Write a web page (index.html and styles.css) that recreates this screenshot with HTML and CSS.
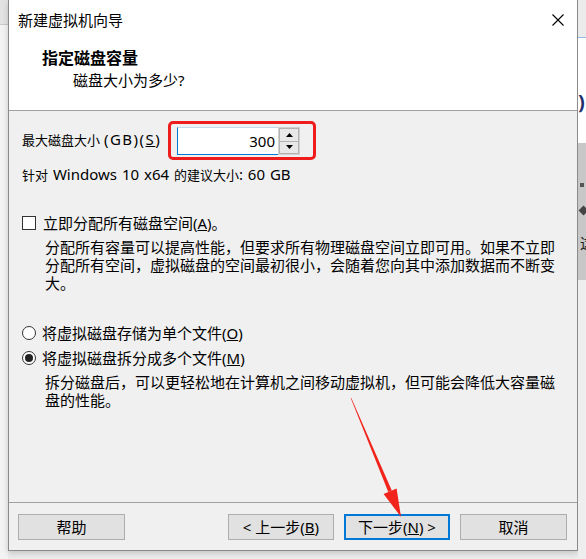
FILE: index.html
```html
<!DOCTYPE html>
<html lang="zh-CN">
<head>
<meta charset="utf-8">
<title>新建虚拟机向导</title>
<link rel="stylesheet" href="styles.css">
</head>
<body>
<div class="screen">
  <div class="strip-left">
    <div class="sl-top"></div>
    <div class="sl-rest"></div>
  </div>

  <div class="dialog">
    <div class="header">
      <div class="titlebar">
        <span class="title">新建虚拟机向导</span>
        <span class="close">
          <svg width="12" height="12" viewBox="0 0 12 12"><path d="M0.5 0.5 L11.5 11.5 M11.5 0.5 L0.5 11.5" stroke="#000" stroke-width="1.1" fill="none"/></svg>
        </span>
      </div>
      <div class="heading">指定磁盘容量</div>
      <div class="subheading">磁盘大小为多少?</div>
    </div>

    <div class="content">
      <div class="size-row">
        <span class="size-label"><span class="cjk">最大磁盘大小</span> <span class="wide">(GB)(<u>S</u>)</span></span>
        <div class="spin">
          <div class="field">300</div>
          <div class="spinner">
            <span class="spin-btn"><svg width="7" height="4" viewBox="0 0 7 4"><path d="M3.5 0 L7 4 L0 4 Z" fill="#000"/></svg></span>
            <span class="spin-btn"><svg width="7" height="4" viewBox="0 0 7 4"><path d="M0 0 L7 0 L3.5 4 Z" fill="#000"/></svg></span>
          </div>
        </div>
      </div>
      <div class="hint"><span class="cjk">针对</span> Windows 10 x64 <span class="cjk">的建议大小</span>: 60 GB</div>

      <div class="check-row"><span class="checkbox"></span>立即分配所有磁盘空间(<u>A</u>)。</div>
      <p class="desc">分配所有容量可以提高性能，但要求所有物理磁盘空间立即可用。如果不立即<br>分配所有空间，虚拟磁盘的空间最初很小，会随着您向其中添加数据而不断变<br>大。</p>

      <div class="radio-row first"><span class="radio"></span>将虚拟磁盘存储为单个文件(<u>O</u>)</div>
      <div class="radio-row second"><span class="radio on"></span>将虚拟磁盘拆分成多个文件(<u>M</u>)</div>
      <p class="desc desc-split">拆分磁盘后，可以更轻松地在计算机之间移动虚拟机，但可能会降低大容量磁<br>盘的性能。</p>
    </div>

    <div class="footer">
      <button class="btn btn-help">帮助</button>
      <div class="nav">
        <button class="btn btn-back">&lt; 上一步(<u>B</u>)</button>
        <button class="btn btn-next">下一步(<u>N</u>) &gt;</button>
        <button class="btn btn-cancel">取消</button>
      </div>
    </div>
  </div>

  <div class="strip-right">
    <div class="sr-top"></div>
    <div class="sr-line"></div>
    <div class="sr-white"><span class="sr-glyph">)</span></div>
    <div class="sr-gray"><span class="sr-dot"></span><span class="sr-diamond"></span><span class="sr-char">这</span></div>
    <div class="sr-rest"></div>
  </div>

  <div class="highlight"></div>
  <svg class="arrow" width="586" height="559" viewBox="0 0 586 559">
    <polygon points="350.6,397.8 351.4,398.2 391.8,490.4 388.3,492.0" fill="#f2231b"/>
    <polygon points="383.6,493.9 396.6,488.5 401,517" fill="#f2231b"/>
  </svg>
</div>
</body>
</html>
```

FILE: styles.css
```css
* { box-sizing: border-box; }

html, body {
  margin: 0;
  padding: 0;
}

body {
  background: #ececec;
  font-family: "Noto Sans", "Noto Sans CJK SC", sans-serif;
  color: #000;
}

.screen {
  position: relative;
  width: 586px;
  height: 559px;
  display: flex;
  align-items: flex-start;
  overflow: hidden;
  background: #ececec;
}

/* background windows at the edges */
.strip-left {
  width: 8px;
  height: 559px;
  display: flex;
  flex-direction: column;
}
.sl-top {
  height: 25px;
  background: #e3e3e3;
  border-bottom: 1px solid #cbcbcb;
}
.sl-rest {
  flex: 1;
  background: #f3f3f3;
}

.strip-right {
  width: 8px;
  height: 559px;
  display: flex;
  flex-direction: column;
  overflow: hidden;
}
.sr-top { height: 37px; background: #ebebeb; }
.sr-line { height: 1px; background: #8fbbe6; }
.sr-white {
  height: 105px;
  background: #ffffff;
  padding-top: 53px;
}
.sr-glyph {
  display: block;
  color: #1f2f6e;
  font-size: 20px;
  font-weight: bold;
  line-height: 22px;
}
.sr-gray {
  height: 137px;
  background: #c7c7c7;
  display: flex;
  flex-direction: column;
  padding-top: 40px;
  padding-left: 2px;
}
.sr-dot { width: 4px; height: 4px; background: #555; flex: none; }
.sr-diamond {
  width: 7px; height: 7px; background: #444;
  transform: rotate(45deg);
  margin-top: 20px;
  flex: none;
}
.sr-char {
  font-family: "Noto Sans CJK SC", sans-serif;
  font-size: 15px;
  line-height: 18px;
  margin-top: 20px;
  color: #222;
}
.sr-rest { flex: 1; background: #eeeeee; }

/* dialog */
.dialog {
  width: 570px;
  height: 551px;
  border: 1px solid #8a8a8a;
  border-top: 0;
  background: #f0f0f0;
  display: flex;
  flex-direction: column;
  box-shadow: 0 2px 6px rgba(0, 0, 0, 0.18);
  font-family: "Noto Sans", "Noto Sans CJK SC", sans-serif;
}

.header {
  height: 111px;
  background: #ffffff;
  border-bottom: 1px solid #a0a0a0;
  font-family: "Noto Sans CJK SC", sans-serif;
}

.titlebar {
  height: 40px;
  display: flex;
  align-items: center;
  justify-content: space-between;
  padding: 0 13px 0 9px;
}
.title {
  font-size: 15px;
  line-height: 20px;
}
.close {
  display: flex;
  width: 12px;
  height: 12px;
}

.heading {
  margin-top: 7px;
  padding-left: 33px;
  font-size: 16px;
  font-weight: bold;
  line-height: 20px;
}
.subheading {
  margin-top: 3px;
  padding-left: 64px;
  font-family: "Noto Sans", "Noto Sans CJK SC", sans-serif;
  font-size: 15px;
  line-height: 20px;
}

.content {
  height: 391px;
  padding-left: 13px;
}

.cjk {
  font-family: "Noto Sans CJK SC", sans-serif;
  font-size: 13px;
}

.size-row {
  display: flex;
  align-items: center;
  margin-top: 16px;
  height: 28px;
}
.size-label {
  width: 155px;
  font-size: 15px;
  line-height: 18px;
  margin-top: -3px;
  white-space: nowrap;
}
.wide {
  letter-spacing: 1.5px;
}
.spin {
  display: flex;
  width: 123px;
  height: 28px;
}
.field {
  flex: 1;
  background: #fff;
  border: 1px solid #0078d7;
  border-top-color: #c5d9ee;
  border-right: 0;
  text-align: right;
  font-size: 15px;
  line-height: 26px;
  padding-right: 3px;
}
.spinner {
  width: 22px;
  display: flex;
  flex-direction: column;
  background: #fff;
  border: 1px solid #d0d0d0;
}
.spin-btn {
  flex: 1;
  display: flex;
  align-items: center;
  justify-content: center;
  background: #e8e8e8;
  border: 1px solid #b4b4b4;
}
.spin-btn + .spin-btn { border-top: 0; }

.hint {
  margin-top: 10px;
  font-size: 15px;
  line-height: 18px;
  white-space: nowrap;
  word-spacing: 1px;
}

.check-row,
.radio-row {
  display: flex;
  align-items: center;
  font-size: 15px;
  line-height: 20px;
}
.check-row { margin-top: 29px; }

.checkbox {
  width: 14px;
  height: 14px;
  border: 1px solid #333;
  background: #fff;
  margin-right: 7px;
  flex: none;
}

.desc {
  margin: 6px 0 0 23px;
  font-size: 15px;
  line-height: 18px;
  white-space: nowrap;
  font-family: "Liberation Sans", "Noto Sans CJK SC", sans-serif;
}

.radio-row.first { margin-top: 30px; }
.radio-row.second { margin-top: 5px; }

.radio {
  width: 14px;
  height: 14px;
  border: 1px solid #333;
  border-radius: 50%;
  background: #fff;
  margin-right: 6px;
  flex: none;
  display: flex;
  align-items: center;
  justify-content: center;
}
.radio.on::after {
  content: "";
  width: 8px;
  height: 8px;
  border-radius: 50%;
  background: #222;
}

.footer {
  flex: 1;
  border-top: 1px solid #a0a0a0;
  display: flex;
  justify-content: space-between;
  align-items: flex-start;
  padding: 11px 10px 0 9px;
}
.nav {
  display: flex;
  gap: 10px;
}

.btn {
  height: 26px;
  background: #e1e1e1;
  border: 1px solid #adadad;
  font-family: "Noto Sans", "Noto Sans CJK SC", sans-serif;
  font-size: 15px;
  line-height: 22px;
  color: #000;
  padding: 0;
  margin: 0;
  text-align: center;
}
.btn-help { width: 107px; }
.btn-back { width: 106px; }
.btn-next {
  width: 106px;
  border: 2px solid #0078d7;
}
.btn-cancel { width: 107px; }

/* annotations drawn over the screenshot */
.highlight {
  position: absolute;
  left: 168px;
  top: 121px;
  width: 148px;
  height: 39px;
  border: 3px solid #ee1c1c;
  border-radius: 5px;
}
.arrow {
  position: absolute;
  left: 0;
  top: 0;
  pointer-events: none;
}
```
